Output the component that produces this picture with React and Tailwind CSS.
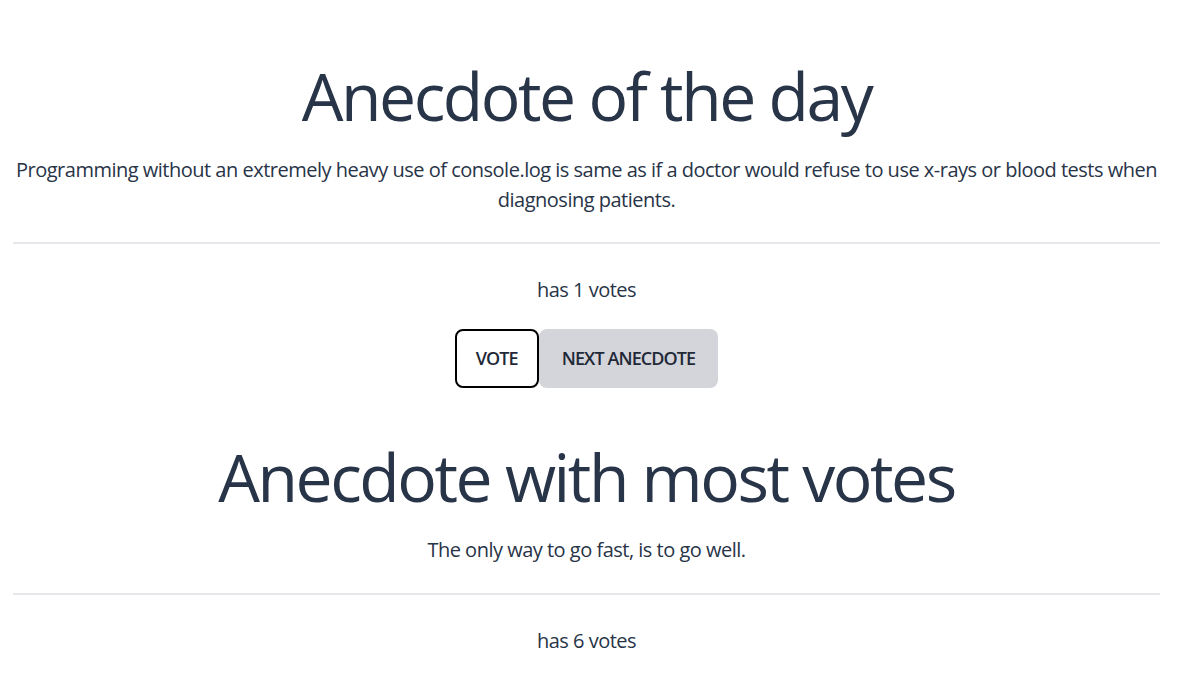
import React from "react";

export default function App() {
  return (
    <div
      className="min-h-screen bg-white pl-[13px] pr-[22px] text-center text-[#283447]"
      style={{ fontFamily: '"Open Sans", "Noto Sans", sans-serif' }}
    >
      <h1 className="pt-[52px] text-[66px] leading-[86px] font-normal tracking-[-2.45px]">Anecdote of the day</h1>
      <p className="mt-[17px] text-[20px] leading-[30px] tracking-[-0.5px]">
        Programming without an extremely heavy use of console.log is same as if a doctor would refuse to use x-rays or blood tests when diagnosing patients.
      </p>
      <hr className="mt-[27px] border-t-2 border-[#e5e7eb]" />
      <p className="mt-[31px] text-[20px] leading-[30px] tracking-[-0.5px]">has 1 votes</p>
      <div className="mt-[24px] flex justify-center">
        <button className="h-[59px] rounded-lg border-2 border-black bg-white px-[19px] text-[18px] font-semibold tracking-[-0.9px] text-[#1f2937]">
          VOTE
        </button>
        <button className="h-[59px] rounded-lg bg-[#d4d5da] px-[23px] text-[18px] font-semibold tracking-[-0.9px] text-[#1f2937]">
          NEXT ANECDOTE
        </button>
      </div>
      <h1 className="mt-[45px] text-[66px] leading-[86px] font-normal tracking-[-2.45px]">Anecdote with most votes</h1>
      <p className="mt-[16px] text-[20px] leading-[30px] tracking-[-0.5px]">The only way to go fast, is to go well.</p>
      <hr className="mt-[28px] border-t-2 border-[#e5e7eb]" />
      <p className="mt-[31px] text-[20px] leading-[30px] tracking-[-0.5px]">has 6 votes</p>
    </div>
  );
}
